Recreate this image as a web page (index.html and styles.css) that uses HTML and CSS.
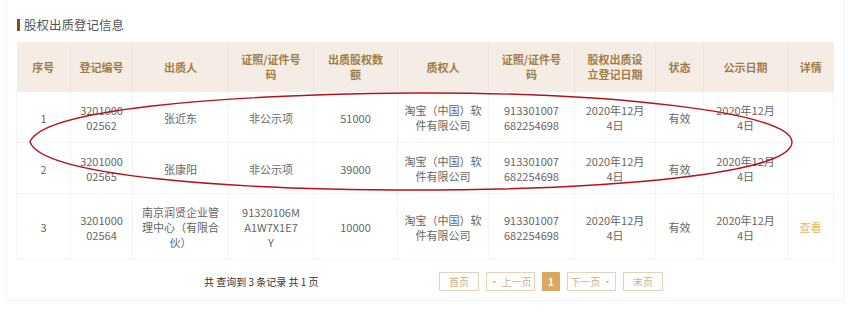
FILE: index.html
```html
<!DOCTYPE html>
<html lang="zh-CN">
<head>
<meta charset="utf-8">
<link rel="stylesheet" href="styles.css">
</head>
<body>
<div class="panel">
  <h2 class="title"><span class="bar"></span>股权出质登记信息</h2>
  <table class="grid">
    <colgroup>
      <col style="width:54px"><col style="width:62px"><col style="width:96px"><col style="width:85px"><col style="width:84px"><col style="width:91px"><col style="width:86px"><col style="width:81px"><col style="width:48px"><col style="width:84px"><col style="width:46px">
    </colgroup>
    <thead>
      <tr>
        <th>序号</th><th>登记编号</th><th>出质人</th><th>证照/证件号<br>码</th><th>出质股权数<br>额</th><th>质权人</th><th>证照/证件号<br>码</th><th>股权出质设<br>立登记日期</th><th>状态</th><th>公示日期</th><th>详情</th>
      </tr>
    </thead>
    <tbody>
      <tr>
        <td>1</td><td>3201000<br>02562</td><td>张近东</td><td>非公示项</td><td>51000</td><td>淘宝（中国）软<br>件有限公司</td><td>913301007<br>682254698</td><td>2020年12月<br>4日</td><td>有效</td><td>2020年12月<br>4日</td><td></td>
      </tr>
      <tr>
        <td>2</td><td>3201000<br>02565</td><td>张康阳</td><td>非公示项</td><td>39000</td><td>淘宝（中国）软<br>件有限公司</td><td>913301007<br>682254698</td><td>2020年12月<br>4日</td><td>有效</td><td>2020年12月<br>4日</td><td></td>
      </tr>
      <tr>
        <td>3</td><td>3201000<br>02564</td><td>南京润贤企业管<br>理中心（有限合<br>伙）</td><td>91320106M<br>A1W7X1E7<br>Y</td><td>10000</td><td>淘宝（中国）软<br>件有限公司</td><td>913301007<br>682254698</td><td>2020年12月<br>4日</td><td>有效</td><td>2020年12月<br>4日</td><td><a class="link">查看</a></td>
      </tr>
    </tbody>
  </table>
  <div class="pager">
    <span class="summary">共 查询到 3 条记录 共 1 页</span>
    <div class="buttons">
      <span class="btn">首页</span>
      <span class="btn wide">• 上一页</span>
      <span class="btn active">1</span>
      <span class="btn wide">下一页 •</span>
      <span class="btn">末页</span>
    </div>
  </div>
  <svg class="mark" width="850" height="312" viewBox="0 0 850 312">
    <path d="M30 142 C42 110 210 95 413 93 C610 92 792 112 792 142 C792 174 610 190 413 190 C230 190 42 176 30 142 Z" fill="none" stroke="#b8101a" stroke-width="1.4"/>
  </svg>
</div>
</body>
</html>
```

FILE: styles.css
```css
* { box-sizing: border-box; }
html, body { margin: 0; padding: 0; background: #fff; }
body {
  width: 850px;
  height: 312px;
  font-family: "Noto Sans CJK SC", "Noto Sans", sans-serif;
  font-size: 11px;
  color: #666;
  position: relative;
  overflow: hidden;
}
.panel {
  margin: 0 6px;
  height: 301px;
  border: 1px solid #f2f2f2;
  border-top: none;
  padding: 16px 9px 0 9px;
}
.title {
  margin: 0;
  display: flex;
  align-items: center;
  gap: 4px;
  font-size: 12.5px;
  font-weight: normal;
  color: #555;
  height: 18px;
  line-height: 18px;
}
.bar {
  display: inline-block;
  width: 3px;
  height: 12px;
  margin-left: 1px;
  background: #8a4a1e;
}
.grid {
  margin-top: 8px;
  width: 817px;
  border-collapse: collapse;
  table-layout: fixed;
}
.grid th {
  background: #f5ece6;
  color: #a07c48;
  font-weight: bold;
  height: 50px;
  line-height: 15px;
  padding: 0 2px;
  text-align: center;
  border-left: 1px solid #efe3db;
}
.grid th:first-child { border-left: none; }
.grid td {
  text-align: center;
  line-height: 15px;
  padding: 11px 2px 9px;
  border: 1px solid #f4f4f4;
  color: #666;
}
.grid tbody tr:first-child td { border-top: none; }
.link { color: #f0b45a; }
.pager {
  display: flex;
  align-items: center;
  height: 20px;
  margin-top: 11px;
}
.summary {
  color: #333;
  font-size: 10px;
  margin-left: 188px;
  width: 235px;
}
.buttons {
  display: flex;
  gap: 7px;
}
.btn {
  height: 19px;
  line-height: 17px;
  border: 1px solid #e3d4b8;
  color: #cdb088;
  padding: 0 9px;
  font-size: 10px;
  text-align: center;
}
.btn.wide { width: 49px; padding: 0; }
.btn.active {
  background: #d9a960;
  border-color: #d9a960;
  color: #fff;
  width: 18px;
  padding: 0;
  font-weight: bold;
}
.mark {
  position: absolute;
  left: 0;
  top: 0;
  pointer-events: none;
}
```
